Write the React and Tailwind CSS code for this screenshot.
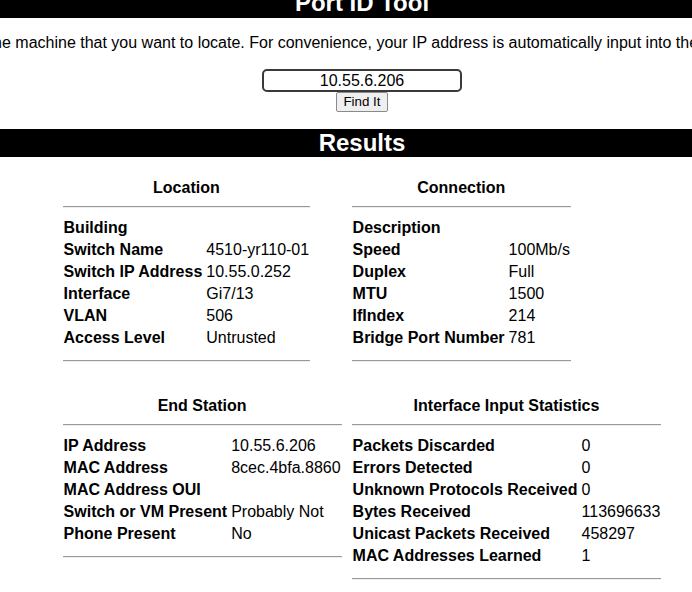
import React from "react";

const location = [
  ["Building", ""],
  ["Switch Name", "4510-yr110-01"],
  ["Switch IP Address", "10.55.0.252"],
  ["Interface", "Gi7/13"],
  ["VLAN", "506"],
  ["Access Level", "Untrusted"],
];

const connection = [
  ["Description", ""],
  ["Speed", "100Mb/s"],
  ["Duplex", "Full"],
  ["MTU", "1500"],
  ["IfIndex", "214"],
  ["Bridge Port Number", "781"],
];

const endStation = [
  ["IP Address", "10.55.6.206"],
  ["MAC Address", "8cec.4bfa.8860"],
  ["MAC Address OUI", ""],
  ["Switch or VM Present", "Probably Not"],
  ["Phone Present", "No"],
];

const stats = [
  ["Packets Discarded", "0"],
  ["Errors Detected", "0"],
  ["Unknown Protocols Received", "0"],
  ["Bytes Received", "113696633"],
  ["Unicast Packets Received", "458297"],
  ["MAC Addresses Learned", "1"],
];

function Rule({ className }) {
  return (
    <div
      className={
        "h-[2px] border-t border-b border-t-[#9a9a9a] border-b-[#eeeeee] " +
        className
      }
    />
  );
}

function Section({ title, rows }) {
  return (
    <div className="w-fit">
      <div className="h-[18px] leading-[18px] text-center font-bold">
        {title}
      </div>
      <Rule className="mt-[9px]" />
      <div className="mt-[9px] grid grid-cols-[auto_auto] gap-x-[2px]">
        {rows.map(([label, value]) => (
          <React.Fragment key={label}>
            <div className="h-[22px] leading-[22px] px-[1px] font-bold whitespace-nowrap">
              {label}
            </div>
            <div className="h-[22px] leading-[22px] px-[1px] whitespace-nowrap">
              {value}
            </div>
          </React.Fragment>
        ))}
      </div>
      <Rule className="mt-[11px]" />
    </div>
  );
}

export default function App() {
  return (
    <div className="w-[692px] h-[592px] overflow-hidden bg-white text-black font-['Liberation_Sans',Arial,sans-serif] text-[16px]">
      <div className="w-[724px] -mt-[10px]">
        <div className="h-[28px] leading-[26px] bg-black text-white text-[24px] font-bold text-center">
          Port ID Tool
        </div>
        <div className="mt-[16px] flex justify-center">
          <p className="h-[18px] leading-[18px] whitespace-nowrap shrink-0">
            Enter the IP address of the machine that you want to locate. For
            convenience, your IP address is automatically input into the box
            below. Then click Find It
          </p>
        </div>
        <div className="mt-[17px] flex flex-col items-center">
          <input
            type="text"
            defaultValue="10.55.6.206"
            className="w-[200px] h-[23px] border-2 border-[#3a3a3a] rounded-[5px] text-center text-[16px] leading-[19px] text-black bg-white outline-none font-['Liberation_Sans',Arial,sans-serif]"
          />
          <button className="w-[52px] h-[20px] border border-[#8a8a8a] rounded-[2px] bg-[#efefef] text-[13.33px] leading-[18px] text-black font-['Liberation_Sans',Arial,sans-serif]">
            Find It
          </button>
        </div>
        <div className="mt-[17px] h-[28px] leading-[27px] bg-black text-white text-[24px] font-bold text-center">
          Results
        </div>
        <div className="mt-[22px] grid grid-cols-[auto_auto] justify-center items-start gap-x-[10px] gap-y-[35px]">
          <Section title="Location" rows={location} />
          <Section title="Connection" rows={connection} />
          <Section title="End Station" rows={endStation} />
          <Section title="Interface Input Statistics" rows={stats} />
        </div>
      </div>
    </div>
  );
}
